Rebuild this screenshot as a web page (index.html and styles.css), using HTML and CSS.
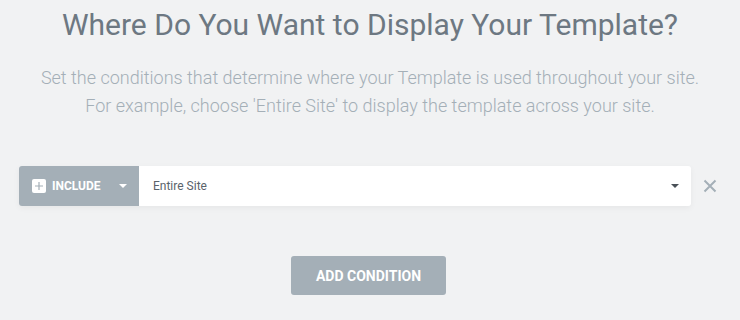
FILE: index.html
```html
<!DOCTYPE html>
<html>
<head>
<meta charset="utf-8">
<link rel="stylesheet" href="styles.css">
</head>
<body>
<div class="page">
  <h1 class="title">Where Do You Want to Display Your Template?</h1>
  <p class="subtitle">Set the conditions that determine where your Template is used throughout your site.<br>For example, choose 'Entire Site' to display the template across your site.</p>
  <div class="conditions">
    <div class="row">
      <div class="include">
        <span class="plus"><svg width="14" height="14" viewBox="0 0 14 14"><rect x="0" y="0" width="14" height="14" rx="2" fill="#fff"/><path d="M7 3v8M3 7h8" stroke="#a4afb7" stroke-width="1.2"/></svg></span>
        <span class="include-label">INCLUDE</span>
        <span class="caret caret-white"></span>
      </div>
      <div class="select">
        <span class="select-label">Entire Site</span>
        <span class="caret caret-dark"></span>
      </div>
    </div>
    <button class="remove" aria-label="Remove"><svg width="14" height="14" viewBox="0 0 14 14"><path d="M1.5 1.5l11 11M12.5 1.5l-11 11" stroke="#a4afb7" stroke-width="2"/></svg></button>
  </div>
  <div class="actions">
    <button class="add">ADD CONDITION</button>
  </div>
</div>
</body>
</html>
```
FILE: styles.css
```css
html, body {
  margin: 0;
  padding: 0;
  background: #f1f2f3;
  font-family: Roboto, "Liberation Sans", sans-serif;
}
.page {
  width: 740px;
  height: 320px;
  overflow: hidden;
}
.title {
  margin: 0;
  padding-top: 6px;
  text-align: center;
  font-weight: 400;
  font-size: 30px;
  line-height: 38px;
  color: #6d7882;
}
.subtitle {
  margin: 20px 0 0;
  text-align: center;
  font-size: 18px;
  line-height: 28px;
  font-weight: 300;
  color: #a4afb7;
}
.conditions {
  display: flex;
  align-items: center;
  margin: 46px 0 0 19px;
}
.row {
  display: flex;
  width: 672px;
  height: 40px;
  border-radius: 3px;
  overflow: hidden;
  box-shadow: 0 2px 6px rgba(0,0,0,0.05);
}
.include {
  width: 120px;
  background: #a4afb7;
  display: flex;
  align-items: center;
  padding-left: 13px;
  box-sizing: border-box;
  color: #fff;
}
.plus {
  display: flex;
  width: 14px;
  height: 14px;
}
.include-label {
  margin-left: 6px;
  font-size: 12px;
  font-weight: 700;
}
.caret {
  width: 0;
  height: 0;
  border-left: 4px solid transparent;
  border-right: 4px solid transparent;
  border-top: 4px solid #fff;
}
.caret-white {
  margin-left: 18px;
}
.select {
  flex: 1;
  background: #fff;
  display: flex;
  align-items: center;
  padding: 0 12px 0 14px;
}
.select-label {
  flex: 1;
  font-size: 12px;
  color: #5a636b;
}
.caret-dark {
  border-top-color: #495157;
}
.remove {
  background: none;
  border: 0;
  padding: 0;
  margin-left: 12px;
  display: flex;
  width: 14px;
  height: 14px;
}
.actions {
  display: flex;
  justify-content: center;
  margin-top: 50px;
}
.add {
  width: 155px;
  height: 39px;
  margin-left: -3px;
  border: 0;
  border-radius: 3px;
  background: #a4afb7;
  color: #fff;
  font-family: Roboto, "Liberation Sans", sans-serif;
  font-weight: 700;
  font-size: 14px;
  padding: 0;
}
```
